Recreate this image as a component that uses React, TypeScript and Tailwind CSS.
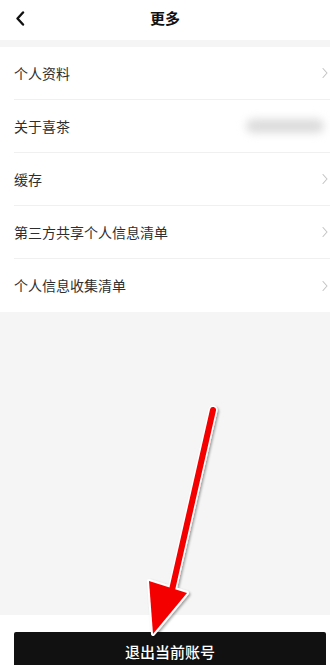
import React from "react";

const ROWS: Array<{ label: string; blurred?: boolean }> = [
  { label: "个人资料" },
  { label: "关于喜茶", blurred: true },
  { label: "缓存" },
  { label: "第三方共享个人信息清单" },
  { label: "个人信息收集清单" },
];

function Chevron() {
  return (
    <svg width="6" height="11" viewBox="0 0 6 11" fill="none" className="absolute right-[2px] top-1/2 -translate-y-1/2">
      <path d="M1 1l4 4.5L1 10" stroke="#c4c4c4" strokeWidth="1.1" strokeLinecap="round" strokeLinejoin="round" />
    </svg>
  );
}

export default function App() {
  return (
    <div
      className="relative flex h-[665px] w-[330px] flex-col overflow-hidden bg-[#f5f5f5] text-[#333]"
      style={{ fontFamily: '"Noto Sans CJK SC", "Noto Sans", sans-serif' }}
    >
      {/* header */}
      <div className="relative flex h-[40px] items-center justify-center bg-white">
        <svg width="10" height="15" viewBox="0 0 10 15" fill="none" className="absolute left-[15px] top-[11px]">
          <path d="M8 1.5L2.5 7.5 8 13.5" stroke="#111" strokeWidth="2.4" strokeLinecap="round" strokeLinejoin="round" />
        </svg>
        <span className="-mt-[4px] text-[15px] font-bold text-[#111]">更多</span>
      </div>

      {/* list */}
      <div className="mt-[7px] bg-white pl-[14px]">
        {ROWS.map((row, i) => (
          <div
            key={row.label}
            className={`relative flex h-[53px] items-center text-[14px] text-[#2e2e2e] ${
              i < ROWS.length - 1 ? "border-b border-[#f0f0f0]" : ""
            }`}
          >
            <span>{row.label}</span>
            {row.blurred ? (
              <div className="absolute right-[6px] top-1/2 h-[14px] w-[78px] -translate-y-1/2 rounded-full bg-[#dcdcdc] blur-[4px]" />
            ) : (
              <Chevron />
            )}
          </div>
        ))}
      </div>

      <div className="flex-1" />

      {/* bottom bar */}
      <div className="h-[50px] bg-white pl-[14px] pr-[4px] pt-[17px]">
        <div className="flex h-[44px] justify-center rounded-[2px] bg-[#111] pt-[9px] text-[15px] font-medium text-white">
          退出当前账号
        </div>
      </div>

      {/* red annotation arrow */}
      <svg width="330" height="665" viewBox="0 0 330 665" className="pointer-events-none absolute left-0 top-0">
        <defs>
          <filter id="sh" x="-20%" y="-20%" width="140%" height="140%">
            <feDropShadow dx="1.5" dy="1.5" stdDeviation="1.2" floodColor="#000" floodOpacity="0.35" />
          </filter>
        </defs>
        <g filter="url(#sh)">
          <path d="M213 410 L172 590" stroke="#fff" strokeWidth="9" strokeLinecap="round" />
          <path d="M149 581 L187 593 L153 634 Z" fill="#fff" stroke="#fff" strokeWidth="4" strokeLinejoin="round" />
          <path d="M213 410 L172 590" stroke="#f50000" strokeWidth="6" strokeLinecap="round" />
          <path d="M149 581 L187 593 L153 634 Z" fill="#f50000" />
        </g>
      </svg>
    </div>
  );
}
